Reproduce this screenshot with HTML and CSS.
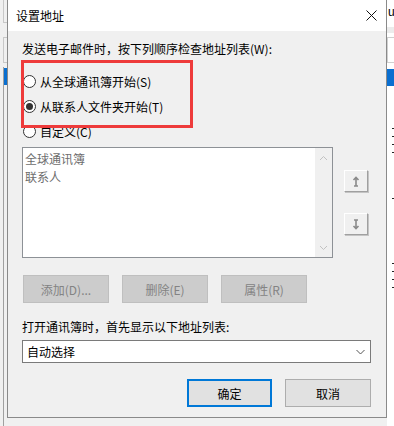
FILE: index.html
```html
<!DOCTYPE html>
<html lang="zh-CN">
<head>
  <meta charset="UTF-8">
  <title>设置地址</title>
  <link rel="stylesheet" href="styles.css">
</head>
<body>
  <div class="side-left">
    <div class="sl-box1"></div>
    <div class="sl-box2"></div>
    <div class="sl-rail"><div class="sl-sel"></div></div>
  </div>

  <div class="dialog">
    <div class="titlebar">
      <span class="title">设置地址</span>
      <svg class="close" width="11" height="11" viewBox="0 0 11 11">
        <path d="M0.5 0.5 L10.5 10.5 M10.5 0.5 L0.5 10.5" stroke="#111" stroke-width="1" fill="none"/>
      </svg>
    </div>

    <div class="content">
      <p class="label">发送电子邮件时，按下列顺序检查地址列表(W):</p>

      <div class="radios">
        <label class="radio"><span class="dot"></span>从全球通讯簿开始(S)</label>
        <label class="radio"><span class="dot on"></span>从联系人文件夹开始(T)</label>
        <label class="radio"><span class="dot"></span>自定义(C)</label>
      </div>

      <div class="list-row">
        <div class="listbox">
          <div class="items">
            <div class="item">全球通讯簿</div>
            <div class="item">联系人</div>
          </div>
          <div class="scroll">
            <svg width="9" height="6" viewBox="0 0 9 6"><path d="M1 5 L4.5 1.5 L8 5" stroke="#c2c2c2" fill="none"/></svg>
            <svg width="9" height="6" viewBox="0 0 9 6"><path d="M1 1 L4.5 4.5 L8 1" stroke="#c2c2c2" fill="none"/></svg>
          </div>
        </div>
        <div class="move">
          <div class="mbtn">
            <svg width="8" height="11" viewBox="0 0 8 11"><path d="M4 1.5 V10 M1.5 4 L4 1.5 L6.5 4 M2 10 H6" stroke="#8a8a8a" stroke-width="1.6" fill="none"/></svg>
          </div>
          <div class="mbtn">
            <svg width="8" height="11" viewBox="0 0 8 11"><path d="M4 1 V9.5 M1.5 7 L4 9.5 L6.5 7 M2 1 H6" stroke="#8a8a8a" stroke-width="1.6" fill="none"/></svg>
          </div>
        </div>
      </div>

      <div class="actions">
        <div class="btn off">添加(D)...</div>
        <div class="btn off">删除(E)</div>
        <div class="btn off">属性(R)</div>
      </div>

      <p class="label label2">打开通讯簿时，首先显示以下地址列表:</p>
      <div class="select">
        <span>自动选择</span>
        <svg width="9" height="6" viewBox="0 0 9 6"><path d="M0.5 1 L4.5 5 L8.5 1" stroke="#555" fill="none"/></svg>
      </div>

      <div class="footer">
        <div class="btn ok">确定</div>
        <div class="btn">取消</div>
      </div>
    </div>

    <!-- 截图里的红框标注 -->
    <div class="mark"></div>
  </div>

  <div class="side-right">
    <div class="sr-u">u</div>
    <div class="sr-band"></div>
    <div class="sr-box"></div>
    <div class="sr-sel"></div>
    <div class="sr-dots g1"><i></i><i></i><i></i><i></i></div>
    <div class="sr-dots g2"><i></i></div>
    <div class="sr-dots g3"><i></i><i></i><i></i><i></i></div>
  </div>
</body>
</html>
```

FILE: styles.css
```css
* {
  box-sizing: border-box;
}
body {
  margin: 0;
  width: 394px;
  height: 426px;
  overflow: hidden;
  display: flex;
  background: #f0f0f0;
  font-family: "Noto Sans CJK SC", "Noto Sans", sans-serif;
  font-size: 12px;
  color: #000;
}
p {
  margin: 0;
}

/* background window, left */
.side-left {
  width: 7px;
  flex: none;
  background: #f0f0f0;
}
.sl-box1 {
  height: 23px;
  margin-left: 3px;
  border-left: 1px solid #c8c8c8;
  border-bottom: 1px solid #c8c8c8;
}
.sl-box2 {
  height: 26px;
  margin: 14px 0 0 3px;
  border: 1px solid #c8c8c8;
  border-right: none;
}
.sl-rail {
  height: 360px;
  margin: 4px 0 0 3px;
  border-left: 1px solid #a0a0a0;
  padding-top: 1px;
}
.sl-sel {
  height: 17px;
  background: #0a6fd0;
}

/* dialog */
.dialog {
  position: relative;
  width: 380px;
  height: 418px;
  flex: none;
  background: #f0f0f0;
  border: 1px solid #8a8a8a;
  border-top: none;
  display: flex;
  flex-direction: column;
}
.titlebar {
  height: 31px;
  background: #fff;
  display: flex;
  align-items: center;
  justify-content: space-between;
  padding: 0 9px 0 8px;
}
.title {
  line-height: 16px;
}
.content {
  padding: 10px 15px 0 14px;
}
.label {
  line-height: 16px;
}
.radios {
  margin-top: 12px;
}
.radio {
  display: flex;
  align-items: center;
  height: 25px;
  padding-left: 1px;
}
.dot {
  width: 13px;
  height: 13px;
  border: 1px solid #333;
  border-radius: 50%;
  background: #fff;
  margin-right: 4px;
  display: flex;
  align-items: center;
  justify-content: center;
}
.dot.on::after {
  content: "";
  width: 7px;
  height: 7px;
  border-radius: 50%;
  background: #333;
}

.list-row {
  display: flex;
  margin-top: 3px;
}
.listbox {
  width: 311px;
  height: 111px;
  background: #fff;
  border: 1px solid #8d9196;
  display: flex;
}
.items {
  flex: 1;
  padding: 2px 2px;
  color: #6d6d6d;
}
.item {
  line-height: 18px;
}
.scroll {
  width: 17px;
  background: #f0f0f0;
  display: flex;
  flex-direction: column;
  justify-content: space-between;
  align-items: center;
  padding: 7px 0 6px;
}
.move {
  margin: 23px 0 0 11px;
  display: flex;
  flex-direction: column;
  gap: 21px;
}
.mbtn {
  width: 24px;
  height: 22px;
  background: #f0f0f0;
  border: 1px solid #fff;
  border-right-color: #a0a0a0;
  border-bottom-color: #a0a0a0;
  box-shadow: 1px 1px 0 #c4c4c4;
  display: flex;
  align-items: center;
  justify-content: center;
}

.actions {
  display: flex;
  gap: 13px;
  margin: 17px 0 0 1px;
}
.btn {
  width: 86px;
  height: 28px;
  border: 1px solid #adadad;
  background: #e1e1e1;
  display: flex;
  align-items: center;
  justify-content: center;
}
.btn.off {
  background: #cccccc;
  border-color: #bfbfbf;
  color: #838383;
}
.label2 {
  margin-top: 16px;
}
.select {
  margin-top: 5px;
  height: 23px;
  background: #fff;
  border: 1px solid #7a7a7a;
  display: flex;
  align-items: center;
  justify-content: space-between;
  padding: 0 5px 0 4px;
}
.footer {
  display: flex;
  justify-content: flex-end;
  gap: 13px;
  margin-top: 16px;
}
.btn.ok {
  width: 85px;
  border: 2px solid #0078d7;
}

.mark {
  position: absolute;
  left: 13px;
  top: 60px;
  width: 172px;
  height: 68px;
  border: 3px solid #ee3b3b;
}

/* background window, right */
.side-right {
  flex: 1;
  background: #fff;
}
.sr-u {
  font-family: "Liberation Sans", sans-serif;
  font-size: 12px;
  line-height: 14px;
  margin-top: 5px;
  padding-left: 1px;
}
.sr-band {
  height: 6px;
  margin-top: 8px;
  background: #ececec;
}
.sr-box {
  height: 26px;
  margin-top: 4px;
  border: 1px solid #d0d0d0;
  border-right: none;
}
.sr-sel {
  height: 17px;
  margin-top: 6px;
  background: #0a6fd0;
}
.sr-dots {
  padding-left: 5px;
  display: flex;
  flex-direction: column;
  gap: 7px;
}
.sr-dots.g1 {
  margin-top: 42px;
}
.sr-dots.g2 {
  margin-top: 45px;
}
.sr-dots.g3 {
  margin-top: 64px;
}
.sr-dots i {
  width: 2px;
  height: 1px;
  background: #222;
}
```
